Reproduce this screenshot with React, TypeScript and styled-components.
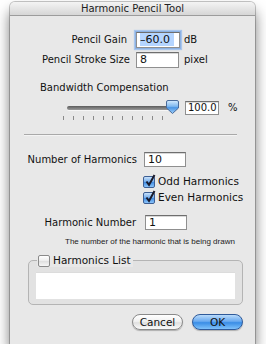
import React from "react";
import styled, { createGlobalStyle } from "styled-components";

const Global = createGlobalStyle`
  html, body { margin: 0; padding: 0; background: #ffffff; }
  body { font-family: "DejaVu Sans", "Liberation Sans", sans-serif; color: #111; }
`;

const Window = styled.div`
  margin: 2px 0 0 10px;
  width: 245px;
  height: 342px;
  background: #e8e8e8;
  border-radius: 5px 5px 0 0;
  box-shadow: 0 0 0 1px rgba(0, 0, 0, 0.22), 0 9px 14px rgba(0, 0, 0, 0.55);
  display: flex;
  flex-direction: column;
  overflow: hidden;
`;

const TitleBar = styled.div`
  height: 13px;
  background: linear-gradient(#f4f4f4, #d6d6d6);
  border-bottom: 1px solid #9c9c9c;
  font-size: 10px;
  line-height: 14px;
  text-align: center;
  color: #222;
`;

const Body = styled.div`
  display: flex;
  flex-direction: column;
  font-size: 10px;
`;

const Row = styled.div<{ $top: number; $left?: number }>`
  display: flex;
  align-items: center;
  margin-top: ${(p) => p.$top}px;
  margin-left: ${(p) => p.$left ?? 0}px;
`;

const Label = styled.div<{ $w: number; $gap: number }>`
  width: ${(p) => p.$w}px;
  margin-right: ${(p) => p.$gap}px;
  text-align: right;
  white-space: nowrap;
  line-height: 14px;
`;

const Field = styled.div<{ $w: number; $h?: number; $focus?: boolean; $small?: boolean }>`
  box-sizing: border-box;
  width: ${(p) => p.$w}px;
  height: ${(p) => p.$h ?? 16}px;
  background: #fff;
  border: 1px solid #8f8f8f;
  border-top-color: #6e6e6e;
  box-shadow: ${(p) =>
    p.$focus ? "0 0 0 1px #8db2e3, 0 0 1px 2px #a9c6ec" : "inset 0 1px 0 #d8d8d8"};
  font-size: ${(p) => (p.$small ? 10 : 11)}px;
  line-height: ${(p) => (p.$h ?? 16) - 2}px;
  padding-left: ${(p) => (p.$small ? 2 : 3)}px;
  white-space: nowrap;
  overflow: hidden;
`;

const Selected = styled.span`
  background: #b5d5ff;
  padding-right: 4px;
`;

const Unit = styled.span<{ $gap: number }>`
  margin-left: ${(p) => p.$gap}px;
  line-height: 14px;
`;

const SectionLabel = styled.div<{ $top: number; $left: number }>`
  margin-top: ${(p) => p.$top}px;
  margin-left: ${(p) => p.$left}px;
  line-height: 13px;
`;

const SliderBox = styled.div`
  position: relative;
  width: 112px;
  height: 14px;
  margin-right: 6px;
`;

const Track = styled.div`
  margin-top: 5px;
  width: 106px;
  height: 4px;
  border-radius: 2px;
  background: linear-gradient(#5c5c5c, #9a9a9a);
  box-shadow: 0 1px 0 #f6f6f6;
`;

const Knob = styled.svg`
  position: absolute;
  right: 0;
  top: -1px;
`;

const Ticks = styled.div`
  display: flex;
  justify-content: space-between;
  width: 100px;
  margin-top: 1px;
  margin-left: 53px;
`;

const Tick = styled.span`
  width: 1px;
  height: 4px;
  background: #8a8a8a;
`;

const Separator = styled.div`
  margin: 14px 0 0 14px;
  width: 213px;
  height: 1px;
  background: #a9a9a9;
  box-shadow: 0 1px 0 #f4f4f4;
`;

const CheckRow = styled.div<{ $top: number; $left: number }>`
  display: flex;
  align-items: center;
  margin-top: ${(p) => p.$top}px;
  margin-left: ${(p) => p.$left}px;
  font-size: 10.5px;
  line-height: 13px;
`;

const Box = styled.span<{ $on?: boolean }>`
  position: relative;
  box-sizing: border-box;
  width: 12px;
  height: 12px;
  margin-right: 3px;
  border-radius: 2px;
  border: 1px solid ${(p) => (p.$on ? "#3d5f94" : "#8a8a8a")};
  background: ${(p) =>
    p.$on
      ? "linear-gradient(#c9e2fb, #6fa9ea 50%, #3f8ae0 51%, #8cc5fb)"
      : "linear-gradient(#ffffff, #ececec 50%, #dedede 51%, #f6f6f6)"};
  flex: none;
`;

const Check = styled.svg`
  position: absolute;
  left: 1px;
  top: -3px;
`;

const Hint = styled.div`
  margin: 6px 0 0 55px;
  font-family: "Liberation Sans", "DejaVu Sans", sans-serif;
  font-size: 8px;
  line-height: 11px;
  white-space: nowrap;
  color: #222;
`;

const Group = styled.fieldset`
  margin: 7px 0 0 18px;
  padding: 5px 7px 5px 7px;
  width: 215px;
  box-sizing: border-box;
  border: 1px solid #b4b4b4;
  border-radius: 5px;
  background: #e2e2e2;
`;

const Legend = styled.legend`
  padding: 0 2px 0 1px;
  margin-left: 1px;
  display: flex;
  align-items: center;
  font-size: 10.5px;
  line-height: 13px;
  background: #e8e8e8;
`;

const ListField = styled.div`
  height: 27px;
  background: #fff;
  box-shadow: inset 0 1px 0 #dcdcdc;
`;

const Buttons = styled.div`
  display: flex;
  justify-content: flex-end;
  gap: 9px;
  margin: 9px 12px 0 0;
`;

const Button = styled.div<{ $primary?: boolean }>`
  box-sizing: border-box;
  width: 51px;
  height: 16px;
  border-radius: 8px;
  border: 1px solid ${(p) => (p.$primary ? "#2f5a9a" : "#8a8a8a")};
  background: ${(p) =>
    p.$primary
      ? "linear-gradient(#b9dbfb, #6aaaf0 45%, #3a8de6 55%, #7fc2fb)"
      : "linear-gradient(#ffffff, #f1f1f1 45%, #e0e0e0 55%, #fafafa)"};
  box-shadow: 0 1px 1px rgba(0, 0, 0, 0.25);
  font-size: 10.5px;
  line-height: 14px;
  text-align: center;
  color: #111;
`;

const Checkbox = ({ on }: { on?: boolean }) => (
  <Box $on={on}>
    {on && (
      <Check width="11" height="13" viewBox="0 0 11 13">
        <path d="M1.5 7.5 L4 11 L9.5 1" fill="none" stroke="#1a1a2a" strokeWidth="2" />
      </Check>
    )}
  </Box>
);

export default function App() {
  return (
    <>
      <Global />
      <Window>
        <TitleBar>Harmonic Pencil Tool</TitleBar>
        <Body>
          <Row $top={16}>
            <Label $w={117} $gap={9}>Pencil Gain</Label>
            <Field $w={44} $focus>
              <Selected>–60.0</Selected>
            </Field>
            <Unit $gap={4}>dB</Unit>
          </Row>
          <Row $top={4}>
            <Label $w={120} $gap={6}>Pencil Stroke Size</Label>
            <Field $w={43}>8</Field>
            <Unit $gap={5}>pixel</Unit>
          </Row>
          <SectionLabel $top={13} $left={30}>Bandwidth Compensation</SectionLabel>
          <Row $top={7} $left={57}>
            <SliderBox>
              <Track />
              <Knob width="13" height="14" viewBox="0 0 13 14">
                <defs>
                  <linearGradient id="kg" x1="0" y1="0" x2="0" y2="1">
                    <stop offset="0" stopColor="#d6ecff" />
                    <stop offset="0.45" stopColor="#7fb8f0" />
                    <stop offset="0.55" stopColor="#4b95e4" />
                    <stop offset="1" stopColor="#9fd0fb" />
                  </linearGradient>
                </defs>
                <path
                  d="M2 0.5 H11 Q12.5 0.5 12.5 2 V8 L6.5 13.5 L0.5 8 V2 Q0.5 0.5 2 0.5 Z"
                  fill="url(#kg)"
                  stroke="#4a6b9a"
                />
              </Knob>
            </SliderBox>
            <Field $w={34} $h={14} $small>100.0</Field>
            <Unit $gap={9}>%</Unit>
          </Row>
          <Ticks>
            {Array.from({ length: 11 }).map((_, i) => (
              <Tick key={i} />
            ))}
          </Ticks>
          <Separator />
          <Row $top={17}>
            <Label $w={127} $gap={7}>Number of Harmonics</Label>
            <Field $w={42} $h={15}>10</Field>
          </Row>
          <CheckRow $top={8} $left={133}>
            <Checkbox on />
            Odd Harmonics
          </CheckRow>
          <CheckRow $top={3} $left={133}>
            <Checkbox on />
            Even Harmonics
          </CheckRow>
          <Row $top={11}>
            <Label $w={126} $gap={9}>Harmonic Number</Label>
            <Field $w={42} $h={15}>1</Field>
          </Row>
          <Hint>The number of the harmonic that is being drawn</Hint>
          <Group>
            <Legend>
              <Checkbox />
              Harmonics List
            </Legend>
            <ListField />
          </Group>
          <Buttons>
            <Button>Cancel</Button>
            <Button $primary>OK</Button>
          </Buttons>
        </Body>
      </Window>
    </>
  );
}
